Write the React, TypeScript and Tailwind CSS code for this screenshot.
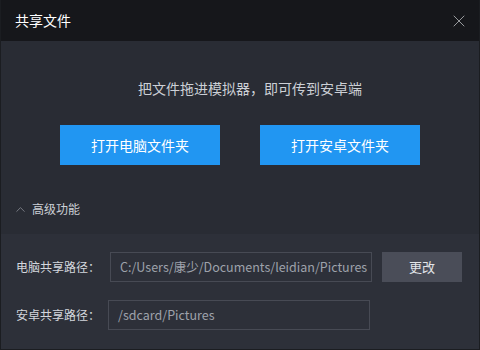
import { X, ChevronUp } from 'lucide-react'

const font = { fontFamily: '"Noto Sans CJK SC", "Noto Sans", sans-serif' }

function PathRow({ label, value, action, labelW }: { label: string; value: string; action?: boolean; labelW: string }) {
  return (
    <div className="flex items-center">
      <span className={`${labelW} shrink-0 text-[12px] text-[#d4d7dd]`}>{label}</span>
      <div className="flex h-[30px] w-[262px] items-center overflow-hidden whitespace-nowrap border border-[#474a54] px-[9px] text-[12.5px] text-[#9ea2ab]">
        {value}
      </div>
      {action && (
        <button className="ml-[10px] h-[30px] w-[80px] bg-[#4a4d58] text-[13px] text-[#e2e4e8]">更改</button>
      )}
    </div>
  )
}

export default function App() {
  return (
    <div style={font} className="flex h-[350px] w-[480px] flex-col border border-t-0 border-[#1b1d21] bg-[#292c34]">
      <div className="flex h-[41px] shrink-0 items-center justify-between bg-[#16171b] pl-[14px] pr-[10px]">
        <span className="text-[14px] text-white">共享文件</span>
        <X size={20} strokeWidth={1.1} className="text-[#a4a6aa]" />
      </div>

      <p className="mt-[37px] pl-[20px] text-center text-[14px] leading-[20px] text-[#ccd0d6]">把文件拖进模拟器，即可传到安卓端</p>

      <div className="mt-[27px] flex justify-center gap-[40px]">
        <button className="h-[40px] w-[160px] bg-[#2196f2] text-[14px] text-white">打开电脑文件夹</button>
        <button className="h-[40px] w-[160px] bg-[#2196f2] text-[14px] text-white">打开安卓文件夹</button>
      </div>

      <div className="mt-[34px] flex h-[20px] items-center pl-[12px] text-[12px] text-[#ccd0d6]">
        <ChevronUp size={15} strokeWidth={1.2} className="text-[#8f939b]" />
        <span className="ml-[4px]">高级功能</span>
      </div>

      <div className="mt-[15px] flex flex-1 flex-col gap-[18px] bg-[#2d3039] pl-[15px] pt-[18px]">
        <PathRow labelW="w-[94px]" label="电脑共享路径：" value="C:/Users/康少/Documents/leidian/Pictures" action />
        <PathRow labelW="w-[92px]" label="安卓共享路径：" value="/sdcard/Pictures" />
      </div>
    </div>
  )
}
